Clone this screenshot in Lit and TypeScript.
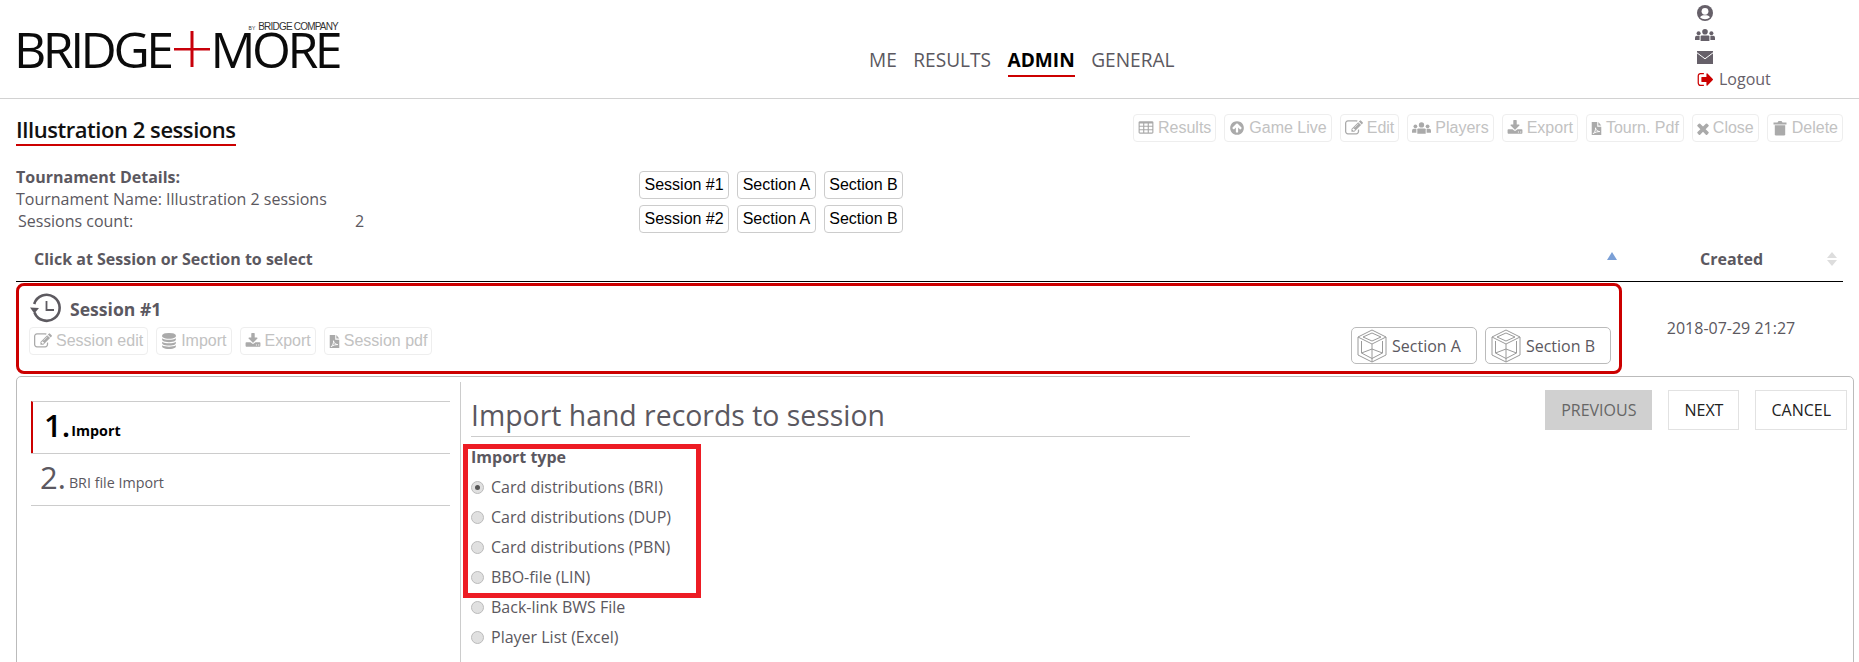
import { LitElement, html, css } from "lit";
import { customElement } from "lit/decorators.js";

const FA: Record<string, string> = {
  table: "M576 1376v-192q0-14-9-23t-23-9h-320q-14 0-23 9t-9 23v192q0 14 9 23t23 9h320q14 0 23-9t9-23zm0-384v-192q0-14-9-23t-23-9h-320q-14 0-23 9t-9 23v192q0 14 9 23t23 9h320q14 0 23-9t9-23zm512 384v-192q0-14-9-23t-23-9h-320q-14 0-23 9t-9 23v192q0 14 9 23t23 9h320q14 0 23-9t9-23zm-512-768v-192q0-14-9-23t-23-9h-320q-14 0-23 9t-9 23v192q0 14 9 23t23 9h320q14 0 23-9t9-23zm512 384v-192q0-14-9-23t-23-9h-320q-14 0-23 9t-9 23v192q0 14 9 23t23 9h320q14 0 23-9t9-23zm512 384v-192q0-14-9-23t-23-9h-320q-14 0-23 9t-9 23v192q0 14 9 23t23 9h320q14 0 23-9t9-23zm-512-768v-192q0-14-9-23t-23-9h-320q-14 0-23 9t-9 23v192q0 14 9 23t23 9h320q14 0 23-9t9-23zm512 384v-192q0-14-9-23t-23-9h-320q-14 0-23 9t-9 23v192q0 14 9 23t23 9h320q14 0 23-9t9-23zm0-384v-192q0-14-9-23t-23-9h-320q-14 0-23 9t-9 23v192q0 14 9 23t23 9h320q14 0 23-9t9-23zm128-320v1088q0 66-47 113t-113 47h-1344q-66 0-113-47t-47-113v-1088q0-66 47-113t113-47h1344q66 0 113 47t47 113z",
  up: "M1412 895q0-27-18-45l-362-362-91-91q-18-18-45-18t-45 18l-91 91-362 362q-18 18-18 45t18 45l91 91q18 18 45 18t45-18l189-189v502q0 26 19 45t45 19h128q26 0 45-19t19-45v-502l189 189q19 19 45 19t45-19l91-91q18-18 18-45zm252 1q0 209-103 385.5t-279.5 279.5-385.5 103-385.5-103-279.5-279.5-103-385.5 103-385.5 279.5-279.5 385.5-103 385.5 103 279.5 279.5 103 385.5z",
  edit: "M888 1184l116-116-152-152-116 116v56h96v96h56zm440-720q-16-16-33 1l-350 350q-17 17-1 33t33-1l350-350q17-17 1-33zm80 594v190q0 119-84.5 203.5t-203.5 84.5h-832q-119 0-203.5-84.5t-84.5-203.5v-832q0-119 84.5-203.5t203.5-84.5h832q63 0 117 25 15 7 18 23 3 17-9 29l-49 49q-14 14-32 8-23-6-45-6h-832q-66 0-113 47t-47 113v832q0 66 47 113t113 47h832q66 0 113-47t47-113v-126q0-13 9-22l64-64q15-15 35-7t20 29zm-96-738l288 288-672 672h-288v-288zm444 132l-92 92-288-288 92-92q28-28 68-28t68 28l152 152q28 28 28 68t-28 68z",
  download: "M1344 1344q0-26-19-45t-45-19-45 19-19 45 19 45 45 19 45-19 19-45zm256 0q0-26-19-45t-45-19-45 19-19 45 19 45 45 19 45-19 19-45zm128-224v320q0 40-28 68t-68 28h-1472q-40 0-68-28t-28-68v-320q0-40 28-68t68-28h465l135 136q58 56 136 56t136-56l136-136h464q40 0 68 28t28 68zm-325-569q17 41-14 70l-448 448q-18 19-45 19t-45-19l-448-448q-31-29-14-70 17-39 59-39h256v-448q0-26 19-45t45-19h256q26 0 45 19t19 45v448h256q42 0 59 39z",
  database: "M896 768q237 0 443-43t325-127v170q0 69-103 128t-280 93.5-385 34.5-385-34.5-280-93.5-103-128v-170q119 84 325 127t443 43zm0 768q237 0 443-43t325-127v170q0 69-103 128t-280 93.5-385 34.5-385-34.5-280-93.5-103-128v-170q119 84 325 127t443 43zm0-384q237 0 443-43t325-127v170q0 69-103 128t-280 93.5-385 34.5-385-34.5-280-93.5-103-128v-170q119 84 325 127t443 43zm0-1152q208 0 385 34.5t280 93.5 103 128v128q0 69-103 128t-280 93.5-385 34.5-385-34.5-280-93.5-103-128v-128q0-69 103-128t280-93.5 385-34.5z",
  signout: "M704 1440q0 4 1 20t.5 26.5-3 23.5-10 19.5-20.5 6.5h-320q-119 0-203.5-84.5t-84.5-203.5v-704q0-119 84.5-203.5t203.5-84.5h320q13 0 22.5 9.5t9.5 22.5q0 4 1 20t.5 26.5-3 23.5-10 19.5-20.5 6.5h-320q-66 0-113 47t-47 113v704q0 66 47 113t113 47h312l11.5 1 11.5 3 8 5.5 7 9 2 13.5zm928-544q0 26-19 45l-544 544q-19 19-45 19t-45-19-19-45v-288h-448q-26 0-45-19t-19-45v-384q0-26 19-45t45-19h448v-288q0-26 19-45t45-19 45 19l544 544q19 19 19 45z",
  times: "M1490 1322q0 40-28 68l-136 136q-28 28-68 28t-68-28l-294-294-294 294q-28 28-68 28t-68-28l-136-136q-28-28-28-68t28-68l294-294-294-294q-28-28-28-68t28-68l136-136q28-28 68-28t68 28l294 294 294-294q28-28 68-28t68 28l136 136q28 28 28 68t-28 68l-294 294 294 294q28 28 28 68z",
};

const fa = (n: string, cls = "ic") =>
  html`<svg class=${cls} viewBox="0 0 1792 1792" fill="currentColor"><path d=${FA[n]}></path></svg>`;

const times = () =>
  html`<svg class="ic tm" viewBox="290 220 1210 1340" fill="currentColor"><path d=${FA.times}></path></svg>`;

const users = (cls = "ic usersic") => html`<svg class=${cls} viewBox="0 0 20 12" fill="currentColor">
  <circle cx="10" cy="2.800" r="2.800"></circle>
  <circle cx="3.600" cy="4.200" r="2"></circle>
  <circle cx="16.400" cy="4.200" r="2"></circle>
  <path d="M5.600 7.400q0-1 1-1h6.800q1 0 1 1V12H5.600z"></path>
  <path d="M0 8.600q0-1.800 1.800-1.800h2.800V11H0z"></path>
  <path d="M20 8.600q0-1.800-1.800-1.800h-2.800V11H20z"></path>
</svg>`;

const trash = () => html`<svg class="ic" viewBox="0 0 16 16" fill="currentColor">
  <path d="M1.500 2.500h4l1-1.500h3l1 1.500h4v2h-13z"></path>
  <path d="M2.800 5.300h10.400v9q0 1.200-1.200 1.200H4q-1.200 0-1.200-1.200z"></path>
</svg>`;

const pdf = () => html`<svg class="ic pdf" viewBox="0 0 15 20">
  <path fill="currentColor" d="M1 1h7.500v6.500H14V19H1z"></path>
  <path fill="currentColor" d="M10 1l4 4.800h-4z"></path>
  <path fill="none" stroke="#fff" stroke-width="1.300" d="M3 17c2-1.500 3.500-5 3.200-8 0 2.500 2.300 5 5.800 5.200-3 0-6.500.8-9 2.800z"></path>
</svg>`;

const cube = () => html`<svg class="cube" viewBox="0 0 30 34" fill="none" stroke="#9a9a9a" stroke-width="1">
  <path d="M15 1L29 8V26L15 33L1 26V8Z"></path>
  <path d="M1 8L15 15L29 8"></path>
  <path d="M6 8L15 4L24 8L15 12Z"></path>
  <path d="M15 15V33"></path>
  <path d="M4.500 12V24L15 20L25.500 24V12"></path>
  <path d="M4.500 24L15 29.500L25.500 24"></path>
</svg>`;

const clock = () => html`<svg class="clock" viewBox="0 0 32 32" fill="none" stroke="#5d5a60" stroke-width="2.600">
  <path d="M4.500 19.500A13 13 0 1 0 4.200 11"></path>
  <path d="M0 14.500L4.300 20.500L9 15z" stroke="none" fill="#5d5a60"></path>
  <path d="M16.500 8V17H24" stroke-width="1.800"></path>
</svg>`;

const user = () => html`<svg class="nic" viewBox="0 0 16 16">
  <circle cx="8" cy="8" r="8" fill="currentColor"></circle>
  <circle cx="8" cy="6.300" r="3.400" fill="#fff"></circle>
  <path d="M3 12.300c1-1.700 3-2 5-2s4 .3 5 2c-1.200 1.300-3 2-5 2s-3.800-.7-5-2z" fill="#fff"></path>
</svg>`;

const mail = () => html`<svg class="nic mail" viewBox="0 0 16 13">
  <rect width="16" height="13" fill="currentColor"></rect>
  <path d="M0 1.800L8 7.800L16 1.800" fill="none" stroke="#fff" stroke-width="1"></path>
</svg>`;

const logoutIcon = () => html`<svg class="nic out" viewBox="0 256 1632 1280" preserveAspectRatio="none" fill="currentColor"><path d=${FA.signout}></path></svg>`;

@customElement("app-root")
export class AppRoot extends LitElement {
  static styles = css`
    :host {
      display: block;
      width: 1859px;
      height: 662px;
      overflow: hidden;
      background: #fff;
      font-family: "Open Sans", sans-serif;
      font-size: 16px;
      color: #5b5860;
    }
    .ic { width: 16px; height: 16px; flex: none; }
    .ic.edit { width: 18px; height: 18px; }
    .ic.tm { width: 12px; height: 13px; }
    .pdf { width: 11px; height: 15px; }
    .usersic { width: 19px; height: 12px; }

    header {
      display: flex;
      height: 98px;
      border-bottom: 1px solid #d2d2d2;
    }
    .logo {
      width: 869px;
      padding: 21px 0 0 14px;
      box-sizing: border-box;
      color: #0b0b0b;
      flex: none;
    }
    .logo-by {
      font-family: "Liberation Sans", sans-serif;
      font-size: 10px;
      line-height: 12px;
      height: 9px;
      width: 324px;
      text-align: right;
      color: #333;
      white-space: nowrap;
      letter-spacing: -0.800px;
    }
    .logo-by small { font-size: 5px; margin-right: 3px; letter-spacing: 0; }
    .logo-main {
      display: flex;
      align-items: center;
      height: 38px;
      font-size: 50px;
      line-height: 38px;
      letter-spacing: -3.500px;
      white-space: nowrap;
    }
    .logo-plus { width: 36px; height: 36px; flex: none; margin: 0 1px 0 3px; }
    nav {
      flex: 1;
      display: flex;
      gap: 16.500px;
      padding-top: 48px;
      font-size: 19.100px;
      line-height: 25px;
      align-items: flex-start;
    }
    nav span { padding-bottom: 2px; }
    nav .on { color: #000; font-weight: 700; border-bottom: 2px solid #c00; }
    .usr {
      width: 162px;
      flex: none;
      padding-top: 2px;
      color: #666069;
      display: grid;
      grid-auto-rows: 22px;
      align-items: center;
      margin-left: -1px;
    }
    .nic { width: 16px; height: 16px; display: block; }
    .nic.w { width: 20px; height: 12px; margin-left: -2px; }
    .nic.mail { height: 13px; }
    .nic.out { height: 13px; }
    .logout { display: flex; align-items: center; gap: 6px; }
    .logout svg { color: #c00; }

    .titlebar {
      display: flex;
      justify-content: space-between;
      align-items: flex-start;
      padding: 15px 16px 0;
      height: 53px;
    }
    h1 {
      margin: 0;
      font-size: 22px;
      font-weight: 600;
      line-height: 30px;
      color: #111;
      border-bottom: 2px solid #c00;
      letter-spacing: -0.450px;
    }
    .tools { display: flex; gap: 8px; }
    .tbtn {
      display: flex;
      align-items: center;
      gap: 4px;
      height: 28px;
      box-sizing: border-box;
      padding: 0 4px;
      border: 1px solid #eee;
      border-radius: 4px;
      font-family: "Liberation Sans", sans-serif;
      font-size: 16px;
      color: #c2c2c2;
      white-space: nowrap;
    }
    .tbtn svg { color: #aaa; }

    .details {
      display: flex;
      height: 79px;
      padding-left: 16px;
    }
    .info { width: 623px; flex: none; line-height: 22px; margin-top: -1px; }
    .info b { font-weight: 700; display: block; }
    .count { display: flex; padding-left: 2px; }
    .count span:first-child { width: 337px; }
    .chips { display: grid; grid-template-columns: auto auto auto; gap: 6px 8px; padding-top: 4px; align-self: start; }
    .chip {
      height: 28px;
      box-sizing: border-box;
      display: flex;
      align-items: center;
      justify-content: center;
      padding: 0 4.500px;
      border: 1px solid #ccc;
      border-radius: 4px;
      font-family: "Liberation Sans", sans-serif;
      font-size: 16px;
      color: #000;
      white-space: nowrap;
    }

    .thead {
      display: flex;
      align-items: flex-start;
      margin: 0 16px;
      height: 36px;
      box-sizing: border-box;
      border-bottom: 1px solid #000;
      font-weight: 700;
      line-height: 26px;
    }
    .th1 { width: 1589px; padding-left: 18px; box-sizing: border-box; flex: none; display: flex; justify-content: space-between; align-items: center; }
    .asc { width: 0; height: 0; border: 5px solid transparent; border-top: 0; border-bottom: 8px solid #7a9fd6; margin: -6px -12px 0 0; }
    .th2 { flex: 1; display: flex; justify-content: space-between; align-items: center; padding-left: 95px; }
    .sort { display: grid; gap: 2px; margin-right: 6px; }
    .sort i { width: 0; height: 0; border: 5px solid transparent; }
    .sort i:first-child { border-top: 0; border-bottom: 6px solid #ddd; }
    .sort i:last-child { border-bottom: 0; border-top: 6px solid #ddd; }

    .row { display: flex; margin: 1px 16px 0; height: 91px; }
    .session {
      width: 1606px;
      flex: none;
      box-sizing: border-box;
      border: 3px solid #c00;
      border-radius: 8px;
      padding: 8px 8px 0 10px;
      display: flex;
      justify-content: space-between;
    }
    .s-l { display: grid; align-content: start; gap: 4px; }
    .s-title { display: flex; align-items: center; gap: 8px; font-size: 17.600px; font-weight: 700; height: 29px; padding-left: 1px; }
    .clock { width: 32px; height: 32px; flex: none; }
    .s-tools { display: flex; gap: 8px; }
    .s-r { display: flex; gap: 8px; align-self: end; padding: 0 0 7px; }
    .sec {
      display: flex;
      align-items: center;
      gap: 5px;
      height: 37px;
      box-sizing: border-box;
      padding: 0 15px 0 5px;
      border: 1px solid #bbb;
      border-radius: 5px;
      white-space: nowrap;
    }
    .cube { width: 30px; height: 34px; flex: none; }
    .date { flex: 1; text-align: center; padding: 32px 3px 0 0; line-height: 26px; }

    .wiz {
      margin: 2px 5px 0 16px;
      border: 1px solid #bbb;
      border-radius: 5px 5px 0 0;
      display: flex;
      height: 300px;
      box-sizing: border-box;
    }
    .side { width: 443px; flex: none; padding: 24px 10px 0 14px; box-sizing: border-box; }
    .step {
      height: 52px;
      box-sizing: border-box;
      border-top: 1px solid #ccc;
      display: flex;
      align-items: center;
      padding-left: 9px;
      gap: 3px;
      font-size: 14.300px;
    }
    .step:last-child { border-bottom: 1px solid #ccc; height: 53px; }
    .step .n { font-size: 31px; line-height: 40px; margin-bottom: 5px; }
    .step span:last-child { margin-top: 5px; }
    .step.on { color: #000; font-weight: 700; border-left: 2px solid #c00; padding-left: 11px; gap: 1px; }
    .step.on .n { font-weight: 600; }
    .main {
      flex: 1;
      margin-top: 5px;
      border-left: 1px solid #ccc;
      padding-left: 10px;
      position: relative;
      display: flex;
      min-width: 0;
    }
    .form { width: 719px; flex: none; }
    h2 {
      margin: 0;
      padding-top: 13px;
      height: 55px;
      box-sizing: border-box;
      font-size: 28.400px;
      font-weight: 400;
      line-height: 40px;
      border-bottom: 1px solid #ccc;
    }
    .lbl { font-weight: 700; height: 35px; padding-top: 9px; line-height: 22px; box-sizing: border-box; }
    .radio { display: flex; align-items: center; gap: 7px; height: 30px; }
    .dot {
      width: 11px;
      height: 11px;
      border-radius: 50%;
      border: 1px solid #bbb;
      background: #e0e0e0;
      display: grid;
      place-items: center;
      flex: none;
    }
    .dot.on::after { content: ""; width: 5px; height: 5px; border-radius: 50%; background: #555; }
    .mark {
      position: absolute;
      left: 2px;
      top: 62px;
      width: 238px;
      height: 154px;
      box-sizing: border-box;
      border: 5px solid #ed1c24;
      pointer-events: none;
    }
    .btns { flex: 1; display: flex; justify-content: flex-end; gap: 16px; padding: 8px 6px 0 0; align-items: flex-start; }
    .btn {
      height: 40px;
      box-sizing: border-box;
      display: flex;
      align-items: center;
      justify-content: center;
      padding: 0 15px;
      border: 1px solid #e2e2e2;
      color: #222;
      white-space: nowrap;
    }
    .btn.off { background: #d0d0d0; color: #666; border-color: #d0d0d0; }
  `;

  tbtn(icon: unknown, label: string) {
    return html`<span class="tbtn">${icon}${label}</span>`;
  }

  render() {
    return html`
      <header>
        <div class="logo">
          <div class="logo-by"><small>BY</small>BRIDGE COMPANY</div>
          <div class="logo-main">
            <span>BRIDGE</span>
            <svg class="logo-plus" viewBox="0 0 36 36"><path d="M0 17h36v2.500H0zM16.500 0h3v36h-3z" fill="#c8000a"></path></svg>
            <span>MORE</span>
          </div>
        </div>
        <nav>
          <span>ME</span><span>RESULTS</span><span class="on">ADMIN</span><span>GENERAL</span>
        </nav>
        <div class="usr">
          ${user()}
          ${users("nic w")}
          ${mail()}
          <div class="logout">${logoutIcon()}<span>Logout</span></div>
        </div>
      </header>

      <div class="titlebar">
        <h1>Illustration 2 sessions</h1>
        <div class="tools">
          ${this.tbtn(fa("table"), "Results")}
          ${this.tbtn(fa("up"), "Game Live")}
          ${this.tbtn(fa("edit", "ic edit"), "Edit")}
          ${this.tbtn(users(), "Players")}
          ${this.tbtn(fa("download"), "Export")}
          ${this.tbtn(pdf(), "Tourn. Pdf")}
          ${this.tbtn(times(), "Close")}
          ${this.tbtn(trash(), "Delete")}
        </div>
      </div>

      <div class="details">
        <div class="info">
          <b>Tournament Details:</b>
          <div>Tournament Name: Illustration 2 sessions</div>
          <div class="count"><span>Sessions count:</span><span>2</span></div>
        </div>
        <div class="chips">
          <span class="chip">Session #1</span><span class="chip">Section A</span><span class="chip">Section B</span>
          <span class="chip">Session #2</span><span class="chip">Section A</span><span class="chip">Section B</span>
        </div>
      </div>

      <div class="thead">
        <div class="th1"><span>Click at Session or Section to select</span><i class="asc"></i></div>
        <div class="th2"><span>Created</span><span class="sort"><i></i><i></i></span></div>
      </div>

      <div class="row">
        <div class="session">
          <div class="s-l">
            <div class="s-title">${clock()}<span>Session #1</span></div>
            <div class="s-tools">
              ${this.tbtn(fa("edit", "ic edit"), "Session edit")}
              ${this.tbtn(fa("database"), "Import")}
              ${this.tbtn(fa("download"), "Export")}
              ${this.tbtn(pdf(), "Session pdf")}
            </div>
          </div>
          <div class="s-r">
            <span class="sec">${cube()}Section A</span>
            <span class="sec">${cube()}Section B</span>
          </div>
        </div>
        <div class="date">2018-07-29 21:27</div>
      </div>

      <div class="wiz">
        <div class="side">
          <div class="step on"><span class="n">1.</span><span>Import</span></div>
          <div class="step"><span class="n">2.</span><span>BRI file Import</span></div>
        </div>
        <div class="main">
          <div class="form">
            <h2>Import hand records to session</h2>
            <div class="lbl">Import type</div>
            <div class="radio"><i class="dot on"></i>Card distributions (BRI)</div>
            <div class="radio"><i class="dot"></i>Card distributions (DUP)</div>
            <div class="radio"><i class="dot"></i>Card distributions (PBN)</div>
            <div class="radio"><i class="dot"></i>BBO-file (LIN)</div>
            <div class="radio"><i class="dot"></i>Back-link BWS File</div>
            <div class="radio"><i class="dot"></i>Player List (Excel)</div>
          </div>
          <div class="btns">
            <span class="btn off">PREVIOUS</span>
            <span class="btn">NEXT</span>
            <span class="btn">CANCEL</span>
          </div>
          <div class="mark"></div>
        </div>
      </div>
    `;
  }
}
